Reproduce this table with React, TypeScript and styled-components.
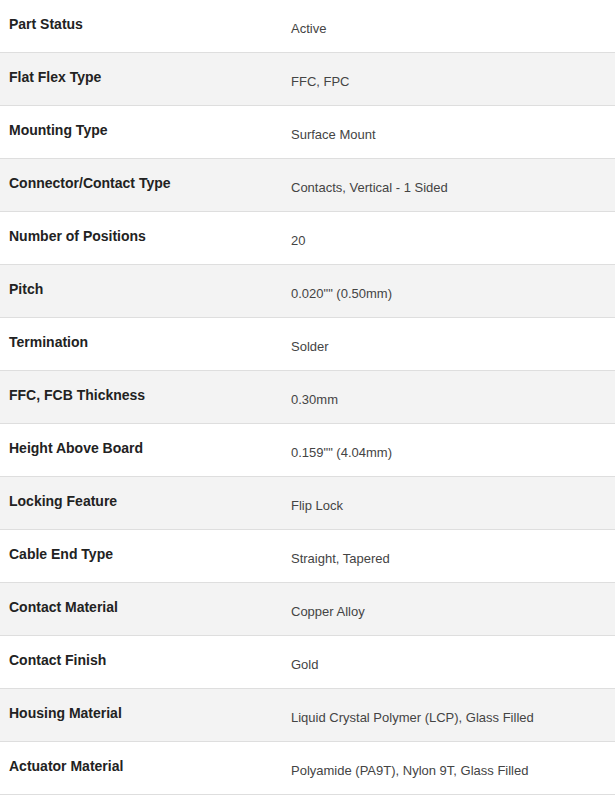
import React from "react";
import styled, { createGlobalStyle } from "styled-components";

const Global = createGlobalStyle`
  html, body { margin: 0; padding: 0; background: #fff; }
  body { font-family: "Liberation Sans", Arial, sans-serif; }
`;

const Table = styled.div`
  width: 615px;
  display: flex;
  flex-direction: column;
`;

const Row = styled.div<{ $alt: boolean }>`
  display: grid;
  grid-template-columns: 291px 1fr;
  height: 52px;
  border-bottom: 1px solid #dedede;
  background: ${(p) => (p.$alt ? "#f3f3f3" : "#ffffff")};
`;

const Label = styled.div`
  padding: 16px 0 0 9px;
  font-size: 14px;
  line-height: 16px;
  font-weight: bold;
  color: #222;
`;

const Value = styled.div`
  padding: 21px 0 0 0;
  font-size: 13px;
  line-height: 15px;
  color: #444;
`;

const rows: [string, string][] = [
  ["Part Status", "Active"],
  ["Flat Flex Type", "FFC, FPC"],
  ["Mounting Type", "Surface Mount"],
  ["Connector/Contact Type", "Contacts, Vertical - 1 Sided"],
  ["Number of Positions", "20"],
  ["Pitch", "0.020\"\" (0.50mm)"],
  ["Termination", "Solder"],
  ["FFC, FCB Thickness", "0.30mm"],
  ["Height Above Board", "0.159\"\" (4.04mm)"],
  ["Locking Feature", "Flip Lock"],
  ["Cable End Type", "Straight, Tapered"],
  ["Contact Material", "Copper Alloy"],
  ["Contact Finish", "Gold"],
  ["Housing Material", "Liquid Crystal Polymer (LCP), Glass Filled"],
  ["Actuator Material", "Polyamide (PA9T), Nylon 9T, Glass Filled"],
];

export default function App() {
  return (
    <>
      <Global />
      <Table>
        {rows.map(([k, v], i) => (
          <Row key={k} $alt={i % 2 === 1}>
            <Label>{k}</Label>
            <Value>{v}</Value>
          </Row>
        ))}
      </Table>
    </>
  );
}
